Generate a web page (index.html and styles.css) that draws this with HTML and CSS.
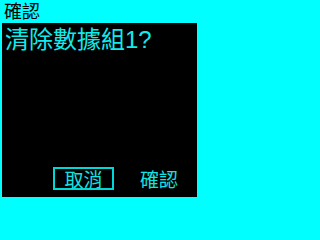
FILE: index.html
```html
<!DOCTYPE html>
<html lang="zh-Hant">
<head>
<meta charset="utf-8">
<link rel="stylesheet" href="styles.css">
</head>
<body>
<div class="screen">
  <div class="title">確認</div>
  <div class="panel">
    <div class="message">清除數據組1?</div>
    <div class="actions">
      <div class="btn btn-cancel">取消</div>
      <div class="btn btn-ok">確認</div>
    </div>
  </div>
</div>
</body>
</html>
```

FILE: styles.css
```css
html, body {
  margin: 0;
  padding: 0;
  background: #00ffff;
}
.screen {
  width: 200px;
  height: 200px;
  display: flex;
  flex-direction: column;
  font-family: "Noto Sans CJK TC", "Noto Sans CJK SC", sans-serif;
}
.title {
  height: 23px;
  line-height: 22px;
  padding: 1px 0 0 4px;
  font-family: "Liberation Sans", "Noto Sans CJK TC", sans-serif;
  font-size: 18px;
  color: #000;
  box-sizing: border-box;
}
.panel {
  margin: 0 3px 3px 2px;
  background: #000;
  flex: 1;
  display: flex;
  flex-direction: column;
}
.message {
  color: #10ecec;
  font-family: "Liberation Sans", "Noto Sans CJK TC", sans-serif;
  font-size: 24px;
  line-height: 26px;
  padding: 4px 0 0 3px;
  white-space: nowrap;
}
.actions {
  margin-top: auto;
  display: flex;
  justify-content: flex-end;
  align-items: center;
  gap: 26px;
  padding: 0 19px 7px 0;
}
.btn {
  color: #10e4e4;
  font-size: 19px;
  line-height: 19px;
}
.btn-cancel {
  width: 61px;
  height: 23px;
  box-sizing: border-box;
  border: 2px solid #00d8d8;
  text-align: center;
}
```
